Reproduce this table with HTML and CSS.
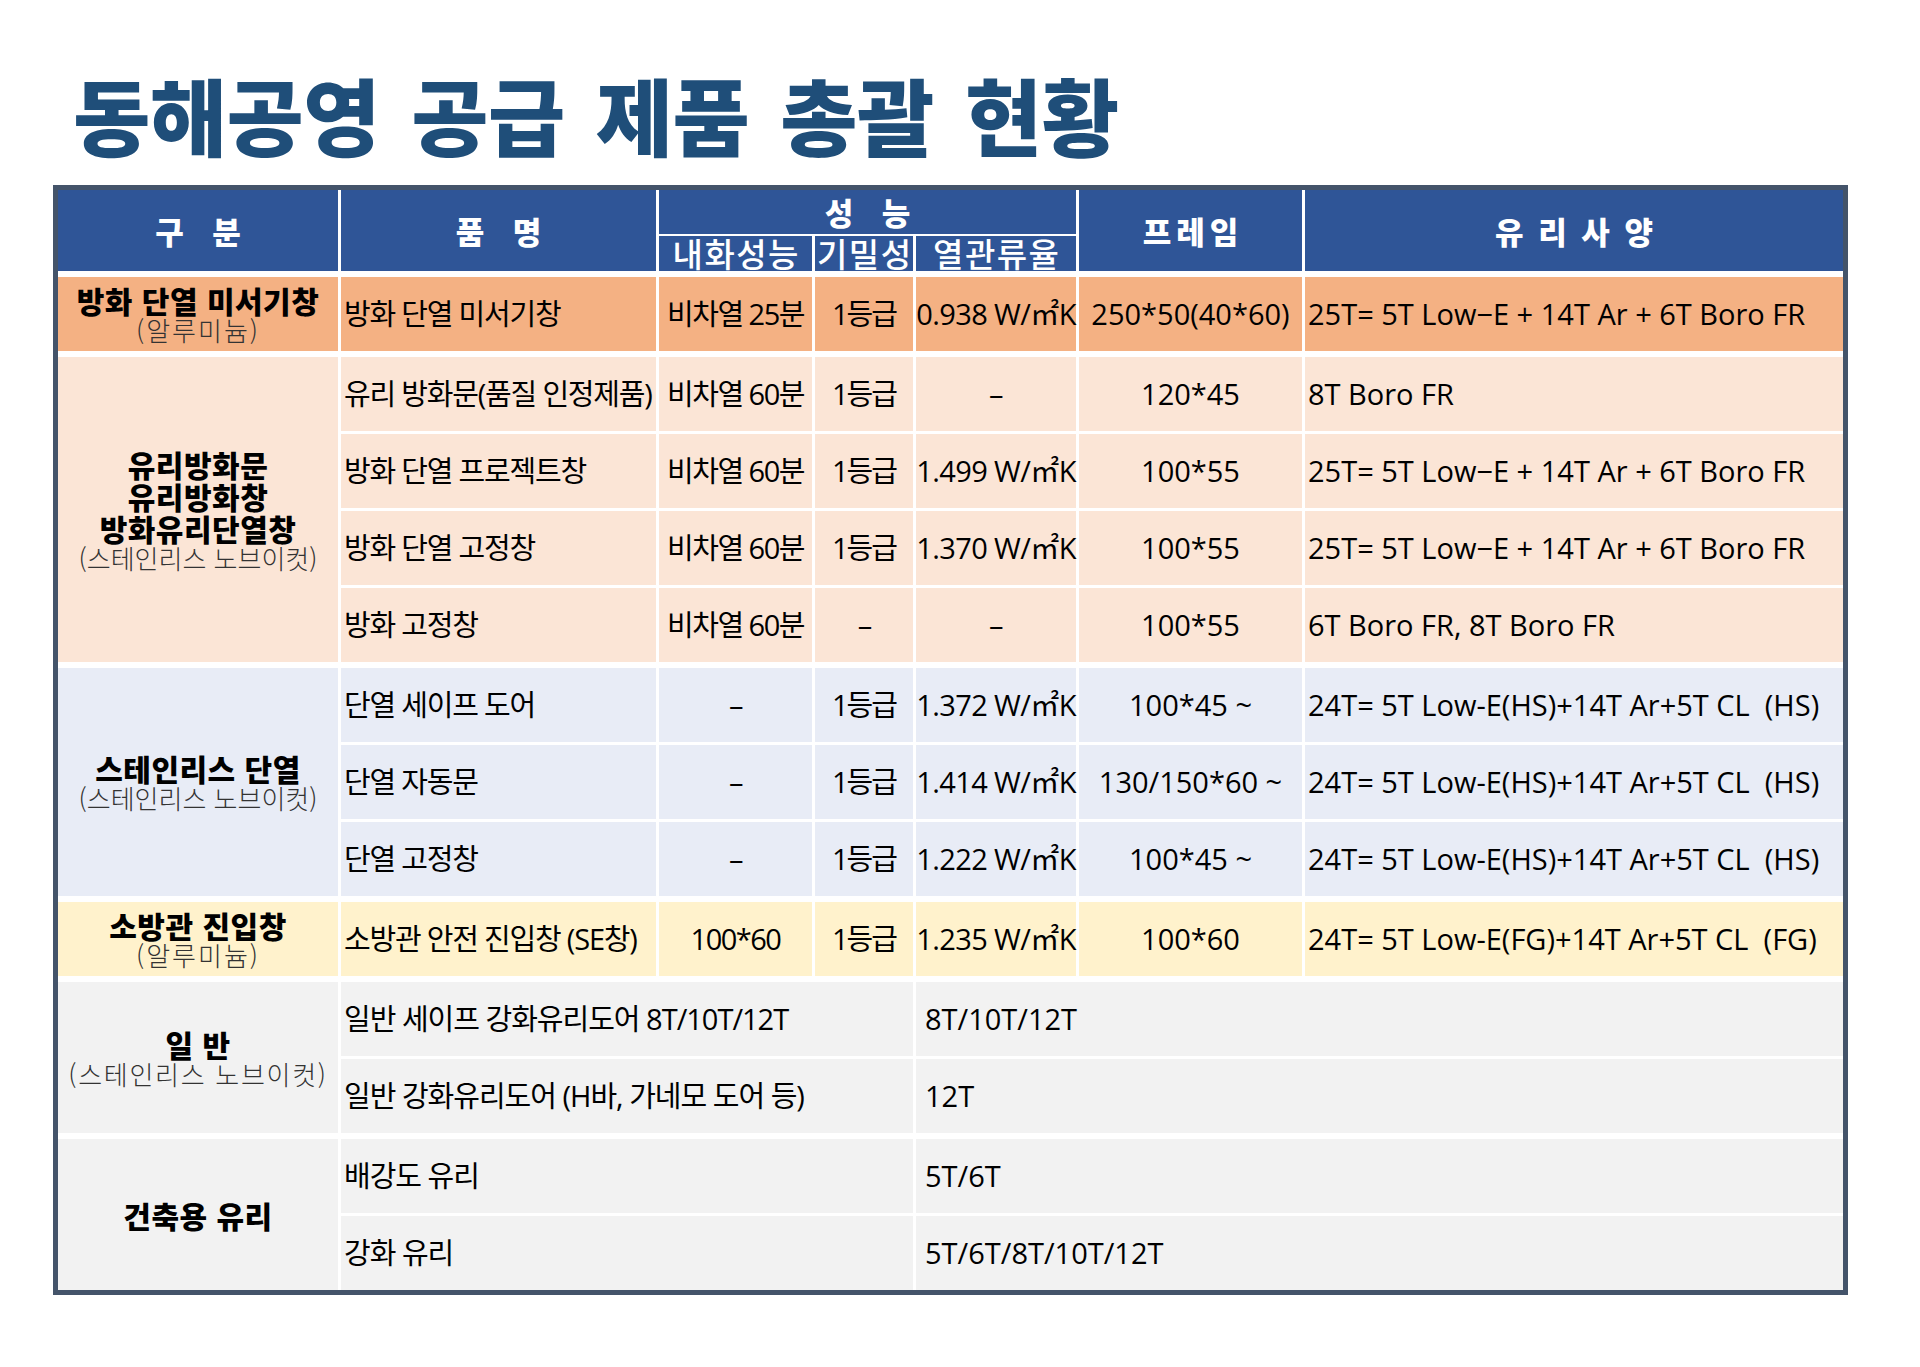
FILE: index.html
```html
<!DOCTYPE html>
<html lang="ko">
<head>
<meta charset="utf-8">
<title>동해공영 공급 제품 총괄 현황</title>
<link rel="stylesheet" href="styles.css">
</head>
<body>
<main class="page">
  <h1 class="title">동해공영 공급 제품 총괄 현황</h1>
  <div class="table">
    <div class="thead">
      <div class="th th-main col-1 sp-wide">구 분</div>
      <div class="th th-main col-2 sp-wide">품 명</div>
      <div class="th th-perf sp-wide">성 능</div>
      <div class="th th-sub col-3">내화성능</div>
      <div class="th th-sub col-4">기밀성</div>
      <div class="th th-sub col-5">열관류율</div>
      <div class="th th-main col-6 sp-frame">프레임</div>
      <div class="th th-main col-7 sp-glass">유 리 사 양</div>
    </div>

    <div class="group rows-1 g-orange">
      <div class="label"><span class="lb">방화 단열 미서기창</span><span class="ls ls-alu">(알루미늄)</span></div>
      <div class="td name">방화 단열 미서기창</div>
      <div class="td fire">비차열 25분</div>
      <div class="td tight">1등급</div>
      <div class="td u">0.938 W/㎡K</div>
      <div class="td frame">250*50(40*60)</div>
      <div class="td glass">25T= 5T Low−E + 14T Ar + 6T Boro FR</div>
    </div>

    <div class="group rows-4 g-peach">
      <div class="label"><span class="lb">유리방화문</span><span class="lb">유리방화창</span><span class="lb">방화유리단열창</span><span class="ls">(스테인리스 노브이컷)</span></div>
      <div class="td name">유리 방화문(품질 인정제품)</div>
      <div class="td fire">비차열 60분</div>
      <div class="td tight">1등급</div>
      <div class="td u">–</div>
      <div class="td frame">120*45</div>
      <div class="td glass">8T Boro FR</div>

      <div class="td name">방화 단열 프로젝트창</div>
      <div class="td fire">비차열 60분</div>
      <div class="td tight">1등급</div>
      <div class="td u">1.499 W/㎡K</div>
      <div class="td frame">100*55</div>
      <div class="td glass">25T= 5T Low−E + 14T Ar + 6T Boro FR</div>

      <div class="td name">방화 단열 고정창</div>
      <div class="td fire">비차열 60분</div>
      <div class="td tight">1등급</div>
      <div class="td u">1.370 W/㎡K</div>
      <div class="td frame">100*55</div>
      <div class="td glass">25T= 5T Low−E + 14T Ar + 6T Boro FR</div>

      <div class="td name">방화 고정창</div>
      <div class="td fire">비차열 60분</div>
      <div class="td tight">–</div>
      <div class="td u">–</div>
      <div class="td frame">100*55</div>
      <div class="td glass">6T Boro FR, 8T Boro FR</div>
    </div>

    <div class="group rows-3 g-blue">
      <div class="label"><span class="lb">스테인리스 단열</span><span class="ls">(스테인리스 노브이컷)</span></div>
      <div class="td name">단열 세이프 도어</div>
      <div class="td fire">–</div>
      <div class="td tight">1등급</div>
      <div class="td u">1.372 W/㎡K</div>
      <div class="td frame">100*45 ~</div>
      <div class="td glass">24T= 5T Low-E(HS)+14T Ar+5T CL&nbsp; (HS)</div>

      <div class="td name">단열 자동문</div>
      <div class="td fire">–</div>
      <div class="td tight">1등급</div>
      <div class="td u">1.414 W/㎡K</div>
      <div class="td frame">130/150*60 ~</div>
      <div class="td glass">24T= 5T Low-E(HS)+14T Ar+5T CL&nbsp; (HS)</div>

      <div class="td name">단열 고정창</div>
      <div class="td fire">–</div>
      <div class="td tight">1등급</div>
      <div class="td u">1.222 W/㎡K</div>
      <div class="td frame">100*45 ~</div>
      <div class="td glass">24T= 5T Low-E(HS)+14T Ar+5T CL&nbsp; (HS)</div>
    </div>

    <div class="group rows-1 g-yellow">
      <div class="label"><span class="lb">소방관 진입창</span><span class="ls ls-alu">(알루미늄)</span></div>
      <div class="td name">소방관 안전 진입창 (SE창)</div>
      <div class="td fire">100*60</div>
      <div class="td tight">1등급</div>
      <div class="td u">1.235 W/㎡K</div>
      <div class="td frame">100*60</div>
      <div class="td glass">24T= 5T Low-E(FG)+14T Ar+5T CL&nbsp; (FG)</div>
    </div>

    <div class="group rows-2 g-gray">
      <div class="label"><span class="lb">일 반</span><span class="ls ls-wide">(스테인리스 노브이컷)</span></div>
      <div class="td wide-name">일반 세이프 강화유리도어 8T/10T/12T</div>
      <div class="td wide-val">8T/10T/12T</div>
      <div class="td wide-name">일반 강화유리도어 (H바, 가네모 도어 등)</div>
      <div class="td wide-val">12T</div>
    </div>

    <div class="group rows-2 g-gray">
      <div class="label"><span class="lb">건축용 유리</span></div>
      <div class="td wide-name">배강도 유리</div>
      <div class="td wide-val">5T/6T</div>
      <div class="td wide-name">강화 유리</div>
      <div class="td wide-val">5T/6T/8T/10T/12T</div>
    </div>
  </div>
</main>
</body>
</html>
```

FILE: styles.css
```css
* {
  box-sizing: border-box;
  margin: 0;
  padding: 0;
}

html,
body {
  background: #ffffff;
}

body {
  font-family: "Open Sans", "Noto Sans CJK KR", sans-serif;
  color: #000000;
}

.page {
  width: 1920px;
  height: 1367px;
  padding: 72px 0 0 53px;
}

.title {
  font-family: "Noto Sans CJK KR", sans-serif;
  font-weight: 900;
  font-size: 84px;
  line-height: 84px;
  letter-spacing: -0.5px;
  word-spacing: 8px;
  color: #1f4e79;
  margin-left: 20px;
  white-space: nowrap;
}

.table {
  margin-top: 29px;
  width: 1795px;
  border: 5px solid #44546a;
  background: #ffffff;
  display: flex;
  flex-direction: column;
  gap: 6px;
}

.thead,
.group {
  display: grid;
  grid-template-columns: 280px 315px 153px 98px 160px 223px 538px;
  column-gap: 3px;
}

.thead {
  grid-template-rows: 44px 35px;
  row-gap: 2px;
}

.group {
  row-gap: 3px;
}

.rows-1 { grid-template-rows: 74px; }
.rows-2 { grid-template-rows: repeat(2, 74px); }
.rows-3 { grid-template-rows: repeat(3, 74px); }
.rows-4 { grid-template-rows: repeat(4, 74px); }

/* header */
.th {
  background: #2f5597;
  color: #ffffff;
  display: flex;
  align-items: center;
  justify-content: center;
  white-space: nowrap;
  font-family: "Noto Sans CJK KR", sans-serif;
}

.th-main {
  grid-row: 1 / 3;
  font-weight: 900;
  font-size: 31px;
}

.th-perf {
  grid-column: 3 / 6;
  grid-row: 1;
  font-weight: 900;
  font-size: 31px;
  line-height: 44px;
}

.th-sub {
  grid-row: 2;
  font-weight: 500;
  font-size: 33px;
  line-height: 35px;
  letter-spacing: 1.5px;
  padding-left: 1.5px;
}

.col-1 { grid-column: 1; }
.col-2 { grid-column: 2; }
.col-3 { grid-column: 3; }
.col-4 { grid-column: 4; }
.col-5 { grid-column: 5; }
.col-6 { grid-column: 6; }
.col-7 { grid-column: 7; }

.sp-wide {
  letter-spacing: 10px;
  padding-left: 10px;
}

.sp-frame {
  letter-spacing: 5px;
  padding-left: 5px;
}

.sp-glass {
  letter-spacing: 3px;
  padding-left: 3px;
}

/* group label (first column) */
.label {
  grid-column: 1;
  grid-row: 1 / -1;
  display: flex;
  flex-direction: column;
  align-items: center;
  justify-content: center;
  font-family: "Noto Sans CJK KR", sans-serif;
  white-space: nowrap;
}

.lb {
  font-weight: 900;
  font-size: 30px;
  line-height: 32px;
  letter-spacing: 0.5px;
  color: #000000;
}

.ls {
  font-weight: 300;
  font-size: 26px;
  line-height: 28px;
  letter-spacing: 0;
  color: #333333;
}

.ls-alu {
  letter-spacing: 2px;
}

.ls-wide {
  letter-spacing: 1.7px;
}

/* body cells */
.td {
  display: flex;
  align-items: center;
  white-space: nowrap;
  font-size: 29px;
  line-height: 1.2;
}

.name {
  padding-left: 3px;
  letter-spacing: -1.2px;
}

.fire {
  justify-content: center;
  letter-spacing: -1.5px;
}

.tight {
  justify-content: center;
  letter-spacing: -2px;
}

.u {
  justify-content: center;
  letter-spacing: -0.6px;
}

.frame {
  justify-content: center;
}

.glass {
  padding-left: 3px;
}

.wide-name {
  grid-column: span 3;
  padding-left: 3px;
  letter-spacing: -1px;
}

.wide-val {
  grid-column: span 3;
  padding-left: 9px;
}

/* group colours */
.g-orange > * { background: #f4b183; }
.g-peach > * { background: #fbe5d6; }
.g-blue > * { background: #e8ecf6; }
.g-yellow > * { background: #fff2cc; }
.g-gray > * { background: #f2f2f2; }
```
